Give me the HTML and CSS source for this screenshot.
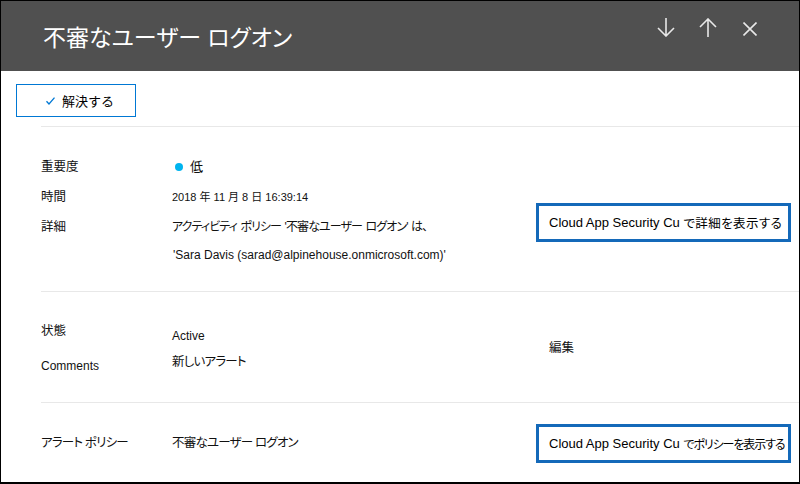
FILE: index.html
```html
<!DOCTYPE html>
<html lang="ja">
<head>
<meta charset="utf-8">
<title>不審なユーザー ログオン</title>
<link rel="stylesheet" href="styles.css">
</head>
<body>
<div class="panel">
  <header class="header">
    <h1 class="title">不審なユーザー ログオン</h1>
    <div class="nav">
      <span class="icon arrow"><svg width="18" height="19" viewBox="0 0 18 19"><path d="M9 0V18M1 10L9 18L17 10" fill="none" stroke="#e8e8e8" stroke-width="1.6"/></svg></span>
      <span class="icon arrow"><svg width="18" height="19" viewBox="0 0 18 19"><path d="M9 19V1M1 9L9 1L17 9" fill="none" stroke="#e8e8e8" stroke-width="1.6"/></svg></span>
      <span class="icon close"><svg width="14" height="14" viewBox="0 0 14 14"><path d="M0.5 0.5L13.5 13.5M13.5 0.5L0.5 13.5" fill="none" stroke="#e8e8e8" stroke-width="1.6"/></svg></span>
    </div>
  </header>
  <div class="toolbar">
    <button class="resolve"><svg class="check" width="9" height="8" viewBox="0 0 9 8"><path d="M0.5 4.2L3 7L8.5 0.6" fill="none" stroke="#0078d4" stroke-width="1.3"/></svg><span>解決する</span></button>
  </div>
  <section class="section s1">
    <div class="col labels">
      <div class="lbl">重要度</div>
      <div class="lbl">時間</div>
      <div class="lbl">詳細</div>
    </div>
    <div class="col values">
      <div class="val sev"><span class="dot"></span>低</div>
      <div class="val date">2018 年 11 月 8 日 16:39:14</div>
      <div class="detail">
        <div class="ja">アクティビティ ポリシー '不審なユーザー ログオン' は、</div>
        <div class="mail">'Sara Davis (sarad@alpinehouse.onmicrosoft.com)'</div>
      </div>
    </div>
    <div class="col actions">
      <div class="linkbox">Cloud App Security Cu <span class="ja wide">で詳細を表示する</span></div>
    </div>
  </section>
  <section class="section s2">
    <div class="col labels">
      <div class="lbl2">状態</div>
      <div class="lbl2 en">Comments</div>
    </div>
    <div class="col values v2">
      <div class="lbl2 en">Active</div>
      <div class="lbl2 ja">新しいアラート</div>
    </div>
    <div class="col actions a2">
      <div class="lbl2">編集</div>
    </div>
  </section>
  <section class="section s3">
    <div class="col labels">
      <div class="lbl2 ja">アラート ポリシー</div>
    </div>
    <div class="col values">
      <div class="lbl2 ja">不審なユーザー ログオン</div>
    </div>
    <div class="col actions a3">
      <div class="linkbox">Cloud App Security Cu <span class="ja narrow">でポリシーを表示する</span></div>
    </div>
  </section>
</div>
</body>
</html>
```
FILE: styles.css
```css
* { box-sizing: border-box; }
html, body { margin: 0; padding: 0; background: #fff; }
body {
  font-family: "Liberation Sans", "Noto Sans CJK JP", sans-serif;
  color: #111;
  font-size: 12px;
}
.panel {
  width: 800px;
  height: 484px;
  border: 1px solid #000;
  border-bottom-width: 2px;
  display: flex;
  flex-direction: column;
  overflow: hidden;
}
.header {
  height: 70px;
  background: #505050;
  display: flex;
  flex-shrink: 0;
}
.title {
  flex: 1;
  margin: 0;
  padding: 25px 0 0 42px;
  font-size: 23px;
  line-height: 24px;
  font-weight: normal;
  color: #fff;
  font-feature-settings: "palt";
}
.nav {
  display: flex;
  align-items: flex-start;
  gap: 24px;
  padding: 17px 42px 0 0;
}
.icon { display: block; line-height: 0; }
.icon.close { margin-top: 4px; margin-left: 2px; }
.toolbar {
  padding: 13px 0 9px 15px;
  flex-shrink: 0;
}
.resolve {
  width: 120px;
  height: 33px;
  border: 1px solid #0078d4;
  background: #fff;
  display: flex;
  align-items: center;
  padding: 0 0 0 29px;
  gap: 7px;
  font-family: inherit;
  font-size: 13px;
  color: #000;
}
.check { display: block; }
.section {
  margin-left: 40px;
  border-top: 1px solid #e8e8e8;
  display: flex;
  flex-shrink: 0;
}
.s1 { height: 165px; }
.s2 { height: 111px; }
.s3 { flex: 1; }
.col { display: flex; flex-direction: column; }
.labels { width: 131px; }
.values { width: 364px; }
.actions { width: 255px; }
.ja { font-feature-settings: "palt"; letter-spacing: -0.4px; }
.s1 .labels { padding-top: 25px; }
.lbl { line-height: 30px; height: 30px; font-size: 12.5px; }
.s1 .values { padding-top: 25px; }
.val { line-height: 30px; height: 30px; display: flex; align-items: center; }
.sev { gap: 7px; font-size: 13px; }
.dot {
  width: 8px; height: 8px; border-radius: 50%;
  background: #00b4ef;
  margin-left: 3px;
}
.date { font-size: 11px; }
.detail { font-size: 12px; line-height: 28px; margin-top: 1px; }
.detail .ja { letter-spacing: -0.9px; word-spacing: 1px; }
.detail .mail { font-size: 12px; padding-left: 1px; }
.s1 .actions { padding-top: 76px; }
.linkbox {
  width: 255px;
  height: 39px;
  border: 3px solid #1469b9;
  display: flex;
  align-items: center;
  padding-left: 10px;
  font-size: 13px;
  color: #000;
  white-space: pre;
}
.linkbox .ja { font-size: 12.5px; }
.linkbox .wide { letter-spacing: 0.4px; }
.linkbox .narrow { font-size: 12px; letter-spacing: -1.1px; }
.lbl2 { line-height: 20px; height: 20px; white-space: nowrap; font-size: 12.5px; }
.lbl2.ja { letter-spacing: -0.8px; }
.en { font-size: 12px; }
.s2 .labels { padding-top: 29px; gap: 15px; }
.s2 .values { padding-top: 34px; gap: 6px; }
.a2 { padding: 46px 0 0 13px; }
.s3 .labels, .s3 .values { padding-top: 30px; }
.a3 { padding-top: 21px; }
```
